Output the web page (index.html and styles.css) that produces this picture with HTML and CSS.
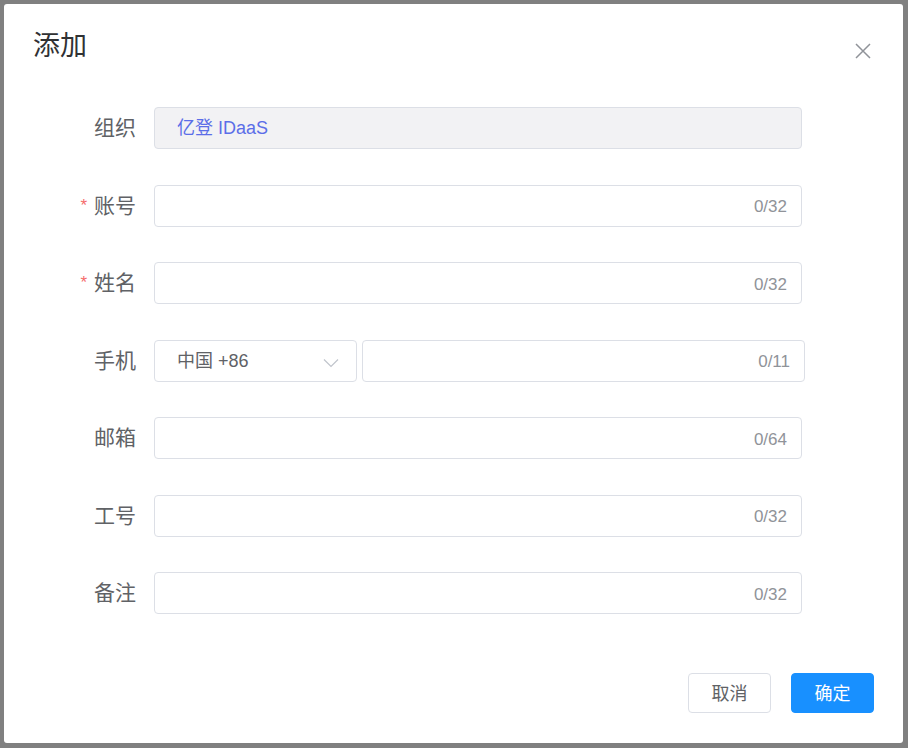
FILE: index.html
```html
<!DOCTYPE html>
<html lang="zh">
<head>
<meta charset="utf-8">
<link rel="stylesheet" href="styles.css">
</head>
<body>
<div class="dialog">
  <div class="header">
    <div class="title">添加</div>
    <button class="close" aria-label="关闭">
      <svg width="16" height="16" viewBox="0 0 16 16"><path d="M1 1L15 15M15 1L1 15" stroke="#909399" stroke-width="1.5" fill="none"/></svg>
    </button>
  </div>
  <div class="form">
    <div class="row">
      <div class="label">组织</div>
      <div class="input disabled"><span class="value">亿登 IDaaS</span></div>
    </div>
    <div class="row">
      <div class="label required">账号</div>
      <div class="input"><span class="count">0/32</span></div>
    </div>
    <div class="row">
      <div class="label required">姓名</div>
      <div class="input"><span class="count">0/32</span></div>
    </div>
    <div class="row">
      <div class="label">手机</div>
      <div class="phone">
        <div class="select"><span class="sel-text">中国 +86</span>
          <svg class="chev" width="16" height="10" viewBox="0 0 16 10"><path d="M1 1.5L8 8.5L15 1.5" stroke="#c0c4cc" stroke-width="1.2" fill="none"/></svg>
        </div>
        <div class="input tel"><span class="count">0/11</span></div>
      </div>
    </div>
    <div class="row">
      <div class="label">邮箱</div>
      <div class="input"><span class="count">0/64</span></div>
    </div>
    <div class="row">
      <div class="label">工号</div>
      <div class="input"><span class="count">0/32</span></div>
    </div>
    <div class="row">
      <div class="label">备注</div>
      <div class="input"><span class="count">0/32</span></div>
    </div>
  </div>
  <div class="footer">
    <button class="btn">取消</button>
    <button class="btn primary">确定</button>
  </div>
</div>
</body>
</html>
```
FILE: styles.css
```css
html, body {
  margin: 0;
  padding: 0;
  background: #808080;
  font-family: "Liberation Sans", "Noto Sans CJK SC", sans-serif;
}
.dialog {
  margin: 4px 0 0 4px;
  width: 899px;
  height: 739px;
  background: #fff;
  border-radius: 3px;
  display: flex;
  flex-direction: column;
  box-sizing: border-box;
}
.header {
  display: flex;
  justify-content: space-between;
  align-items: flex-start;
  padding: 24px 32px 0 29px;
}
.title {
  font-size: 27px;
  line-height: 36px;
  color: #303133;
}
.close {
  margin-top: 15px;
  border: none;
  background: none;
  padding: 0;
  width: 16px;
  height: 16px;
  display: flex;
}
.form {
  display: flex;
  flex-direction: column;
  gap: 35.5px;
  padding-left: 32px;
  margin-top: 43px;
}
.row {
  display: flex;
  align-items: center;
  height: 42px;
}
.label {
  width: 100px;
  margin-right: 18px;
  text-align: right;
  font-size: 21px;
  color: #606266;
  position: relative;
  top: -2px;
}
.label.required::before {
  content: "*";
  color: #f56c6c;
  margin-right: 7px;
  font-size: 17px;
  position: relative;
  top: -2px;
}
.input {
  width: 648px;
  height: 42px;
  box-sizing: border-box;
  border: 1px solid #dcdfe6;
  border-radius: 4px;
  display: flex;
  align-items: center;
  justify-content: flex-end;
  padding: 0 14px 0 22px;
}
.input.disabled {
  background: #f2f2f4;
  justify-content: flex-start;
}
.value {
  font-size: 18px;
  color: #5b6ee8;
  position: relative;
  top: -2px;
}
.count {
  font-size: 17px;
  color: #909399;
  margin-top: 3px;
}
.phone {
  display: flex;
  gap: 5px;
}
.select {
  width: 203px;
  height: 42px;
  box-sizing: border-box;
  border: 1px solid #dcdfe6;
  border-radius: 4px;
  display: flex;
  align-items: center;
  justify-content: space-between;
  padding: 0 17px 0 22px;
}
.sel-text {
  font-size: 18px;
  color: #606266;
  position: relative;
  top: -2px;
}
.chev {
  margin-top: 4px;
}
.input.tel {
  width: 443px;
  padding-right: 14px;
}
.footer {
  margin-top: auto;
  display: flex;
  justify-content: flex-end;
  gap: 20px;
  padding: 0 29px 30px 0;
}
.btn {
  width: 83px;
  height: 40px;
  border: 1px solid #dcdfe6;
  border-radius: 4px;
  background: #fff;
  color: #606266;
  font-size: 18px;
  font-family: "Liberation Sans", "Noto Sans CJK SC", sans-serif;
  padding: 0 0 2px;
}
.btn.primary {
  background: #1890ff;
  border-color: #1890ff;
  color: #fff;
}
```
